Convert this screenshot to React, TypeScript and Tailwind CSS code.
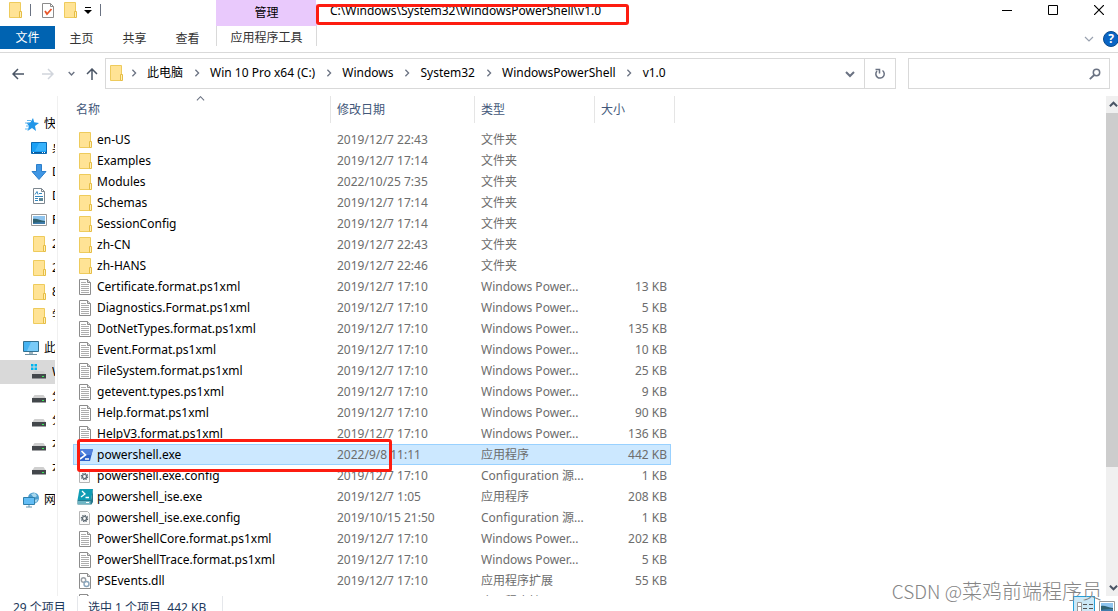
import React from 'react';

type IconProps = { className?: string };

const FolderIcon: React.FC<IconProps> = ({ className = '' }) => (
  <svg width="16" height="16" viewBox="0 0 16 16" className={`shrink-0 ${className}`}>
    <path d="M2.500.5h11v15h-11z" fill="#ffe395" stroke="#eecb5c" />
    <path d="M12.500 9.500h2v6h-2z" fill="#fff0b8" stroke="#e6bd45" />
  </svg>
);

const TextFileIcon: React.FC = () => (
  <svg width="16" height="16" viewBox="0 0 16 16" className="shrink-0">
    <path d="M2.5.5h8l3 3v12h-11z" fill="#fff" stroke="#8c8c8c" />
    <path d="M10.5.5v3h3" fill="#ddd" stroke="#8c8c8c" />
    <path d="M4 3.5h5M4 5.5h8M4 7.5h8M4 9.5h8M4 11.5h8M4 13.5h8" stroke="#adadad" />
  </svg>
);

const PowerShellIcon: React.FC = () => (
  <svg width="16" height="16" viewBox="0 0 16 16" className="shrink-0">
    <path d="M3.5 2H16l-3 12H0z" fill="#2f62c9" />
    <path d="M3.5 2H16l-1.5 6L2 8z" fill="#4f80dd" />
    <path d="M4.5 4l4 4-5.5 4" fill="none" stroke="#fff" strokeWidth="1.6" />
    <path d="M8 12h4" stroke="#fff" strokeWidth="1.5" />
  </svg>
);

const IseIcon: React.FC = () => (
  <svg width="16" height="16" viewBox="0 0 16 16" className="shrink-0">
    <path d="M2.5 0H16l-2 11H.5z" fill="#0f9cb4" />
    <path d="M.5 11H14l2-11v13l-1.5 2.5H.5z" fill="#27788c" />
    <path d="M1 12h12.5v3H1z" fill="#6fb6c5" />
    <path d="M5 2l3 3-4 3M8.5 8.5H12" fill="none" stroke="#fff" strokeWidth="1.3" />
    <path d="M9 13.5h3" stroke="#fff" />
  </svg>
);

const ConfigIcon: React.FC = () => (
  <svg width="16" height="16" viewBox="0 0 16 16" className="shrink-0">
    <path d="M2.5 1.5h8l2 2v11h-10z" fill="#fafafa" stroke="#b5b5b5" />
    <circle cx="7.5" cy="8.5" r="3" fill="none" stroke="#5b6770" strokeWidth="1.5" strokeDasharray="1.4 .9" />
    <circle cx="7.5" cy="8.5" r="2" fill="none" stroke="#5b6770" strokeWidth="1.2" />
  </svg>
);

const DllIcon: React.FC = () => (
  <svg width="16" height="16" viewBox="0 0 16 16" className="shrink-0">
    <path d="M2.5.5h8l3 3v12h-11z" fill="#fff" stroke="#8c8c8c" />
    <path d="M10.5.5v3h3" fill="#ddd" stroke="#8c8c8c" />
    <circle cx="6.5" cy="7" r="2.2" fill="none" stroke="#9aa0a6" strokeWidth="1.4" />
    <circle cx="9.5" cy="11" r="2.5" fill="none" stroke="#8aa6bd" strokeWidth="1.4" />
  </svg>
);

const StarIcon: React.FC = () => (
  <svg width="16" height="16" viewBox="0 0 16 16" className="shrink-0">
    <path d="M10 2l1.200 4.300L16 7l-4 3 1 5-4-3-4.500 3L6 10 3.500 7l4-.7z" fill="#2196e8" />
    <path d="M4 4.500h4M2 7h4M3 10h3M2 13h4" stroke="#63b7ee" />
  </svg>
);

const DesktopIcon: React.FC = () => (
  <svg width="16" height="16" viewBox="0 0 16 16" className="shrink-0">
    <path d="M.5 2.5h15v11H.5z" fill="#1aa0f5" stroke="#0b6ab3" />
    <path d="M8 3h7v8H4z" fill="#38b2fb" />
    <path d="M1 12.5h14" stroke="#0a5a9c" />
    <path d="M2 12.5h1M11 12.5h1M13 12.5h1" stroke="#fff" />
  </svg>
);

const DownloadIcon: React.FC = () => (
  <svg width="16" height="16" viewBox="0 0 16 16" className="shrink-0">
    <path d="M5.5.5h5v7H15L8 15.5 1 7.5h4.5z" fill="#3f96e4" stroke="#2c7fcb" />
  </svg>
);

const DocumentIcon: React.FC = () => (
  <svg width="16" height="16" viewBox="0 0 16 16" className="shrink-0">
    <path d="M2.5.5h8l3 3v12h-11z" fill="#fff" stroke="#7d8790" />
    <path d="M10.5.5v3h3" fill="none" stroke="#7d8790" />
    <path d="M4 6.5l2-3 1 3M8 5.5h3M4 8.5h8M4 10.5h3M4 12.5h3" fill="none" stroke="#3588bf" />
    <path d="M8 10h4v3H8z" fill="#5d8797" />
  </svg>
);

const PictureIcon: React.FC = () => (
  <svg width="16" height="16" viewBox="0 0 16 16" className="shrink-0">
    <path d="M.5 2.5h15v11H.5z" fill="#fff" stroke="#9a9a9a" />
    <path d="M2 4h12v8H2z" fill="#8ec4ee" />
    <path d="M2 7c4-1 7 2 12 2v3H2z" fill="#2f6170" />
    <path d="M2 11c4-1 8-1 12-1v2H2z" fill="#3e7cab" />
  </svg>
);

const ComputerIcon: React.FC = () => (
  <svg width="16" height="16" viewBox="0 0 16 16" className="shrink-0">
    <path d="M.5 1.5h15v10H.5z" fill="#45b3f2" stroke="#33708f" />
    <path d="M8 2h7v9H4z" fill="#79cbf8" />
    <path d="M6 12h4v2H6z" fill="#9bb2bd" />
    <path d="M2 14.5h12" stroke="#6e8fa0" />
  </svg>
);

const DriveIcon: React.FC<{ system?: boolean }> = ({ system }) => (
  <svg width="16" height="16" viewBox="0 0 16 16" className="shrink-0">
    <path d="M3.5 7h9l2.500 3.500H1z" fill="#cfcfcf" />
    <path d="M1 10h14v4.500H1z" fill="#43474b" />
    <path d="M11 12h2v1h-2z" fill="#35ee55" />
    {system && <path d="M0 0h2.5v2.5H0zM3.500 0H6v2.500H3.500zM0 3.500h2.500V6H0zM3.500 3.500H6V6H3.500z" fill="#00b4ef" />}
  </svg>
);

const NetworkIcon: React.FC = () => (
  <svg width="16" height="16" viewBox="0 0 16 16" className="shrink-0">
    <circle cx="10.5" cy="6" r="5.5" fill="#4c9ccc" />
    <path d="M8 2l4-1 2 3-3 2zM11 8l4-1-2 4z" fill="#a9d7ec" />
    <path d="M.5 5.5h11v7H.5z" fill="#63bdf5" stroke="#2f7fab" />
    <path d="M3 15h6M6 13v2" stroke="#6796b0" />
  </svg>
);

const Chevron: React.FC<{ dir: 'up' | 'down' | 'right'; size: number; weight?: number; className?: string }> = ({
  dir,
  size,
  weight = 1.5,
  className = '',
}) => {
  const paths = { up: 'M1 7l4-4 4 4', down: 'M1 3l4 4 4-4', right: 'M3 1l4 4-4 4' };
  return (
    <svg width={size} height={size} viewBox="0 0 10 10" className={`shrink-0 ${className}`}>
      <path d={paths[dir]} fill="none" stroke="currentColor" strokeWidth={weight} />
    </svg>
  );
};

const fileIcons = {
  folder: <FolderIcon />,
  text: <TextFileIcon />,
  ps: <PowerShellIcon />,
  ise: <IseIcon />,
  config: <ConfigIcon />,
  dll: <DllIcon />,
};

type FileRow = { icon: keyof typeof fileIcons; name: string; date: string; type: string; size: string; selected?: boolean };

const files: FileRow[] = [
  { icon: 'folder', name: 'en-US', date: '2019/12/7 22:43', type: '文件夹', size: '' },
  { icon: 'folder', name: 'Examples', date: '2019/12/7 17:14', type: '文件夹', size: '' },
  { icon: 'folder', name: 'Modules', date: '2022/10/25 7:35', type: '文件夹', size: '' },
  { icon: 'folder', name: 'Schemas', date: '2019/12/7 17:14', type: '文件夹', size: '' },
  { icon: 'folder', name: 'SessionConfig', date: '2019/12/7 17:14', type: '文件夹', size: '' },
  { icon: 'folder', name: 'zh-CN', date: '2019/12/7 22:43', type: '文件夹', size: '' },
  { icon: 'folder', name: 'zh-HANS', date: '2019/12/7 22:46', type: '文件夹', size: '' },
  { icon: 'text', name: 'Certificate.format.ps1xml', date: '2019/12/7 17:10', type: 'Windows Power...', size: '13 KB' },
  { icon: 'text', name: 'Diagnostics.Format.ps1xml', date: '2019/12/7 17:10', type: 'Windows Power...', size: '5 KB' },
  { icon: 'text', name: 'DotNetTypes.format.ps1xml', date: '2019/12/7 17:10', type: 'Windows Power...', size: '135 KB' },
  { icon: 'text', name: 'Event.Format.ps1xml', date: '2019/12/7 17:10', type: 'Windows Power...', size: '10 KB' },
  { icon: 'text', name: 'FileSystem.format.ps1xml', date: '2019/12/7 17:10', type: 'Windows Power...', size: '25 KB' },
  { icon: 'text', name: 'getevent.types.ps1xml', date: '2019/12/7 17:10', type: 'Windows Power...', size: '9 KB' },
  { icon: 'text', name: 'Help.format.ps1xml', date: '2019/12/7 17:10', type: 'Windows Power...', size: '90 KB' },
  { icon: 'text', name: 'HelpV3.format.ps1xml', date: '2019/12/7 17:10', type: 'Windows Power...', size: '136 KB' },
  { icon: 'ps', name: 'powershell.exe', date: '2022/9/8 11:11', type: '应用程序', size: '442 KB', selected: true },
  { icon: 'config', name: 'powershell.exe.config', date: '2019/12/7 17:10', type: 'Configuration 源...', size: '1 KB' },
  { icon: 'ise', name: 'powershell_ise.exe', date: '2019/12/7 1:05', type: '应用程序', size: '208 KB' },
  { icon: 'config', name: 'powershell_ise.exe.config', date: '2019/10/15 21:50', type: 'Configuration 源...', size: '1 KB' },
  { icon: 'text', name: 'PowerShellCore.format.ps1xml', date: '2019/12/7 17:10', type: 'Windows Power...', size: '202 KB' },
  { icon: 'text', name: 'PowerShellTrace.format.ps1xml', date: '2019/12/7 17:10', type: 'Windows Power...', size: '5 KB' },
  { icon: 'dll', name: 'PSEvents.dll', date: '2019/12/7 17:10', type: '应用程序扩展', size: '55 KB' },
  { icon: 'dll', name: '', date: '', type: '应用程序扩展', size: '' },
];

const navGroups = [
  {
    root: { icon: <StarIcon />, label: '快速访问' },
    items: [
      { icon: <DesktopIcon />, label: '桌面' },
      { icon: <DownloadIcon />, label: 'Downloads' },
      { icon: <DocumentIcon />, label: 'Documents' },
      { icon: <PictureIcon />, label: 'Pictures' },
      { icon: <FolderIcon />, label: '2' },
      { icon: <FolderIcon />, label: '2' },
      { icon: <FolderIcon />, label: '8' },
      { icon: <FolderIcon />, label: '学' },
    ],
  },
  {
    root: { icon: <ComputerIcon />, label: '此电脑' },
    items: [
      { icon: <DriveIcon system />, label: 'Win 10 Pro x64 (C:)', active: true },
      { icon: <DriveIcon />, label: '分' },
      { icon: <DriveIcon />, label: '分' },
      { icon: <DriveIcon />, label: '本' },
      { icon: <DriveIcon />, label: '本' },
    ],
  },
  { root: { icon: <NetworkIcon />, label: '网络' }, items: [] },
];

const crumbs = ['此电脑', 'Win 10 Pro x64 (C:)', 'Windows', 'System32', 'WindowsPowerShell', 'v1.0'];

const TitleBar: React.FC = () => (
  <header className="flex h-[26px] items-start">
    <div className="flex w-[216px] items-center pt-[2px] pl-[7px]">
      <FolderIcon />
      <span className="ml-[7px] h-3 w-px bg-gray-500" />
      <button aria-label="属性" className="ml-[9px]">
        <svg width="16" height="16" viewBox="0 0 16 16">
          <path d="M2.5 1.5h8l3 3v11h-11z" fill="#fff" stroke="#8c8c8c" />
          <path d="M10.5 1.5v3h3" fill="none" stroke="#8c8c8c" />
          <path d="M5 9l2 3 4.500-5" fill="none" stroke="#e8562a" strokeWidth="1.8" />
        </svg>
      </button>
      <button aria-label="新建文件夹" className="ml-[6px]">
        <FolderIcon />
      </button>
      <button aria-label="自定义快速访问工具栏" className="ml-[6px]">
        <svg width="8" height="8" viewBox="0 0 8 8">
          <path d="M1 1.500h6" stroke="#000" />
          <path d="M0 4h8L4 8z" fill="#000" />
        </svg>
      </button>
      <span className="ml-2 h-3 w-px bg-gray-500" />
    </div>
    <div className="flex h-[26px] w-[101px] items-center justify-center bg-[#e9c9fc]">管理</div>
    <div className="relative ml-[-1px] mt-1 h-[21px] w-[313px]">
      <h1 className="mt-[-3px] pl-[14px] leading-5 whitespace-nowrap">C:\Windows\System32\WindowsPowerShell\v1.0</h1>
      <span className="absolute -top-1 left-0 h-1 w-full bg-white" />
      <span className="absolute inset-0 rounded-[3px] border-3 border-[#fd1c10]" />
    </div>
    <div className="ml-auto flex h-5 gap-2">
      <button aria-label="最小化" className="flex w-[38px] items-center justify-center">
        <svg width="10" height="10" viewBox="0 0 10 10"><path d="M0 5.5h10" stroke="#000" /></svg>
      </button>
      <button aria-label="最大化" className="flex w-[38px] items-center justify-center">
        <svg width="10" height="10" viewBox="0 0 10 10"><path d="M.5.5h9v9h-9z" fill="none" stroke="#000" /></svg>
      </button>
      <button aria-label="关闭" className="flex w-[38px] items-center justify-center">
        <svg width="10" height="10" viewBox="0 0 10 10"><path d="M0 0l10 10M10 0L0 10" stroke="#000" strokeWidth="1.2" /></svg>
      </button>
    </div>
  </header>
);

const RibbonTabs: React.FC = () => (
  <nav className="flex h-[27px] items-start border-b border-[#d9d9d9] text-[#333]">
    <button className="h-[23px] w-[55px] bg-[#0063b1] pt-px text-white">文件</button>
    <button className="h-6 w-[53px] pt-px">主页</button>
    <button className="h-6 w-[53px] pt-px">共享</button>
    <button className="h-6 w-[53px] pt-px">查看</button>
    <button className="ml-[2px] h-5 w-[101px] border-x border-[#d9d9d9] pt-1">应用程序工具</button>
    <div className="ml-auto flex h-[26px] items-center gap-[9px]">
      <button aria-label="展开功能区" className="text-gray-400">
        <Chevron dir="down" size={10} weight={1.2} />
      </button>
      <button
        aria-label="帮助"
        className="-mr-px flex size-4 items-center justify-center rounded-full border border-[#084a8c] bg-[#0a64c4] font-bold text-white"
      >
        ?
      </button>
    </div>
  </nav>
);

const AddressBar: React.FC = () => (
  <div className="flex items-center pt-[5px] pr-2">
    <div className="flex w-[105px] shrink-0 items-center pl-3">
      <button aria-label="后退" className="text-gray-600">
        <svg width="12" height="12" viewBox="0 0 12 12"><path d="M12 6H1M6 1L1 6l5 5" fill="none" stroke="currentColor" strokeWidth="1.5" /></svg>
      </button>
      <button aria-label="前进" className="ml-[18px] text-gray-300">
        <svg width="12" height="12" viewBox="0 0 12 12"><path d="M0 6h11M6 1l5 5-5 5" fill="none" stroke="currentColor" strokeWidth="1.5" /></svg>
      </button>
      <button aria-label="最近浏览的位置" className="ml-[14px] text-gray-500">
        <Chevron dir="down" size={7} weight={2} />
      </button>
      <button aria-label="向上" className="ml-[11px] text-gray-600">
        <svg width="12" height="12" viewBox="0 0 12 12"><path d="M6 12V1M1 6l5-5 5 5" fill="none" stroke="currentColor" strokeWidth="1.5" /></svg>
      </button>
    </div>
    <div className="flex h-[31px] flex-1 items-center border border-[#d9d9d9]">
      <div className="flex items-center pb-[2px] pl-[2px]">
        <FolderIcon className="-mr-1" />
        {crumbs.map((crumb) => (
          <React.Fragment key={crumb}>
            <span className="flex w-[27px] justify-center text-gray-500">
              <Chevron dir="right" size={8} weight={1.6} />
            </span>
            <button className="whitespace-nowrap">{crumb}</button>
          </React.Fragment>
        ))}
      </div>
      <button aria-label="以前的位置" className="ml-auto flex w-[28px] justify-center text-gray-500">
        <Chevron dir="down" size={10} weight={2} />
      </button>
      <button aria-label="刷新" className="flex h-full w-[31px] items-center justify-center border-l border-[#d9d9d9] text-gray-500">
        <svg width="12" height="12" viewBox="0 0 12 12">
          <path d="M8.5 2.5a4.2 4.2 0 1 1-5.500.5M1.500 1.500h4v4" fill="none" stroke="currentColor" strokeWidth="1.5" />
        </svg>
      </button>
    </div>
    <label className="ml-3 flex h-[31px] w-[202px] items-center border border-[#d9d9d9] pr-2 text-gray-500">
      <input type="text" aria-label="搜索" className="min-w-0 flex-1 px-2 outline-none" />
      <svg width="12" height="12" viewBox="0 0 12 12">
        <circle cx="7.5" cy="4.5" r="3.2" fill="none" stroke="currentColor" strokeWidth="1.5" />
        <path d="M5.2 7L.8 11.2" stroke="currentColor" strokeWidth="1.8" />
      </svg>
    </label>
  </div>
);

const Sidebar: React.FC = () => (
  <aside className="flex w-[58px] shrink-0 flex-col gap-2 overflow-hidden border-r border-[#f0f0f0] pt-4 pr-[2px]">
    {navGroups.map(({ root, items }) => (
      <ul key={root.label}>
        <li>
          <a href="#" className="flex h-6 items-center gap-[5px] pl-[23px]">
            {root.icon}
            <span className="min-w-0 overflow-hidden whitespace-nowrap">{root.label}</span>
          </a>
        </li>
        {items.map((item, i) => (
          <li key={i}>
            <a href="#" className={`flex h-6 items-center gap-[5px] pl-[31px] ${'active' in item ? 'bg-[#d9d9d9]' : ''}`}>
              {item.icon}
              <span className="min-w-0 overflow-hidden whitespace-nowrap">{item.label}</span>
            </a>
          </li>
        ))}
      </ul>
    ))}
  </aside>
);

const FileTable: React.FC = () => (
  <table className="w-[602px] table-fixed border-separate border-spacing-0 text-left">
    <colgroup>
      <col className="w-[258px]" />
      <col className="w-[144px]" />
      <col className="w-[120px]" />
      <col className="w-[76px]" />
      <col className="w-1" />
    </colgroup>
    <thead className="text-[#43587a]">
      <tr className="h-[27px]">
        <th className="relative border-r border-[#e5e5e5] pl-[3px] font-normal">
          名称
          <Chevron dir="up" size={9} weight={1.2} className="absolute top-[-2px] left-1/2 -ml-[6px] text-gray-500" />
        </th>
        <th className="border-r border-[#e5e5e5] pl-[6px] font-normal">修改日期</th>
        <th className="border-r border-[#e5e5e5] pl-[6px] font-normal">类型</th>
        <th colSpan={2} className="border-r border-[#e5e5e5] pl-[6px] font-normal">大小</th>
      </tr>
    </thead>
    <tbody className="text-[#6d6d6d] before:block before:h-[6px]">
      {files.map((file) => {
        const cell = file.selected ? 'border-y border-[#99d1ff] bg-[#cce8ff]' : '';
        return (
          <tr key={file.name} className="h-[21px]">
            <td className={`relative p-0 ${file.selected ? 'border-l pl-[3px]' : 'pl-1'} ${cell}`}>
              <div className="flex items-center gap-1 whitespace-nowrap text-black">
                {fileIcons[file.icon]}
                {file.name}
              </div>
              {file.selected && (
                <span className="absolute top-[-6px] left-[3px] z-10 h-[33px] w-[315px] rounded-[3px] border-3 border-[#fd1c10]" />
              )}
            </td>
            <td className={`p-0 pl-[6px] whitespace-nowrap ${cell}`}>{file.date}</td>
            <td className={`p-0 pl-[6px] whitespace-nowrap ${cell}`}>{file.type}</td>
            <td className={`p-0 text-right whitespace-nowrap ${file.selected ? 'border-r pr-[3px]' : 'pr-1'} ${cell}`}>{file.size}</td>
            <td className="p-0" />
          </tr>
        );
      })}
    </tbody>
  </table>
);

const Scrollbar: React.FC = () => (
  <div className="flex w-3 shrink-0 flex-col overflow-hidden bg-[#f0f0f0] text-gray-600">
    <button aria-label="向上滚动" className="flex h-[17px] shrink-0 items-center justify-end">
      <Chevron dir="up" size={9} weight={2.2} />
    </button>
    <div className="flex-1">
      <div className="h-[76%] bg-[#cdcdcd]" />
    </div>
    <button aria-label="向下滚动" className="flex h-[17px] shrink-0 items-center justify-end">
      <Chevron dir="down" size={9} weight={2.2} />
    </button>
  </div>
);

const StatusBar: React.FC = () => (
  <footer className="flex h-[15px] shrink-0 items-start overflow-hidden pl-[13px] leading-6 text-[#1e395b]">
    <span className="w-[64px]">29 个项目</span>
    <span className="h-4 w-px bg-gray-200" />
    <span className="w-[144px] pl-[10px] whitespace-pre">选中 1 个项目  442 KB</span>
    <span className="h-4 w-px bg-gray-200" />
    <div className="ml-auto flex gap-1 pr-[3px]">
      <button aria-label="详细信息" className="h-5 w-[22px] border border-[#26a0da] bg-[#cce8f6] pt-1 pl-[3px]">
        <svg width="16" height="12" viewBox="0 0 16 12">
          <path d="M.5.5h4v11h-4zM.5 4.5h4" fill="#fff" stroke="#999" />
          <path d="M6 2.5h4M12 2.5h4M6 6.5h4M12 6.5h4M6 10.5h4M12 10.5h4" stroke="#555" />
        </svg>
      </button>
      <button aria-label="大缩略图" className="h-5 pt-[2px]">
        <PictureIcon />
      </button>
    </div>
  </footer>
);

const App: React.FC = () => {
  return (
    <div className="relative flex h-screen flex-col overflow-hidden bg-white font-['Noto_Sans','Noto_Sans_CJK_SC',sans-serif] text-[12px] leading-4 text-black">
      <TitleBar />
      <RibbonTabs />
      <AddressBar />
      <main className="mt-[7px] flex min-h-0 flex-1">
        <Sidebar />
        <div className="flex-1 overflow-hidden pl-[15px]">
          <FileTable />
        </div>
        <Scrollbar />
      </main>
      <StatusBar />
      <div className="pointer-events-none absolute right-4 bottom-[6px] font-['Noto_Sans_CJK_SC',sans-serif] text-[20px] leading-7 font-light text-[#858585]">
        <span className="text-[19px]">CSDN @</span>菜鸡前端程序员
      </div>
    </div>
  );
};

export default App;
